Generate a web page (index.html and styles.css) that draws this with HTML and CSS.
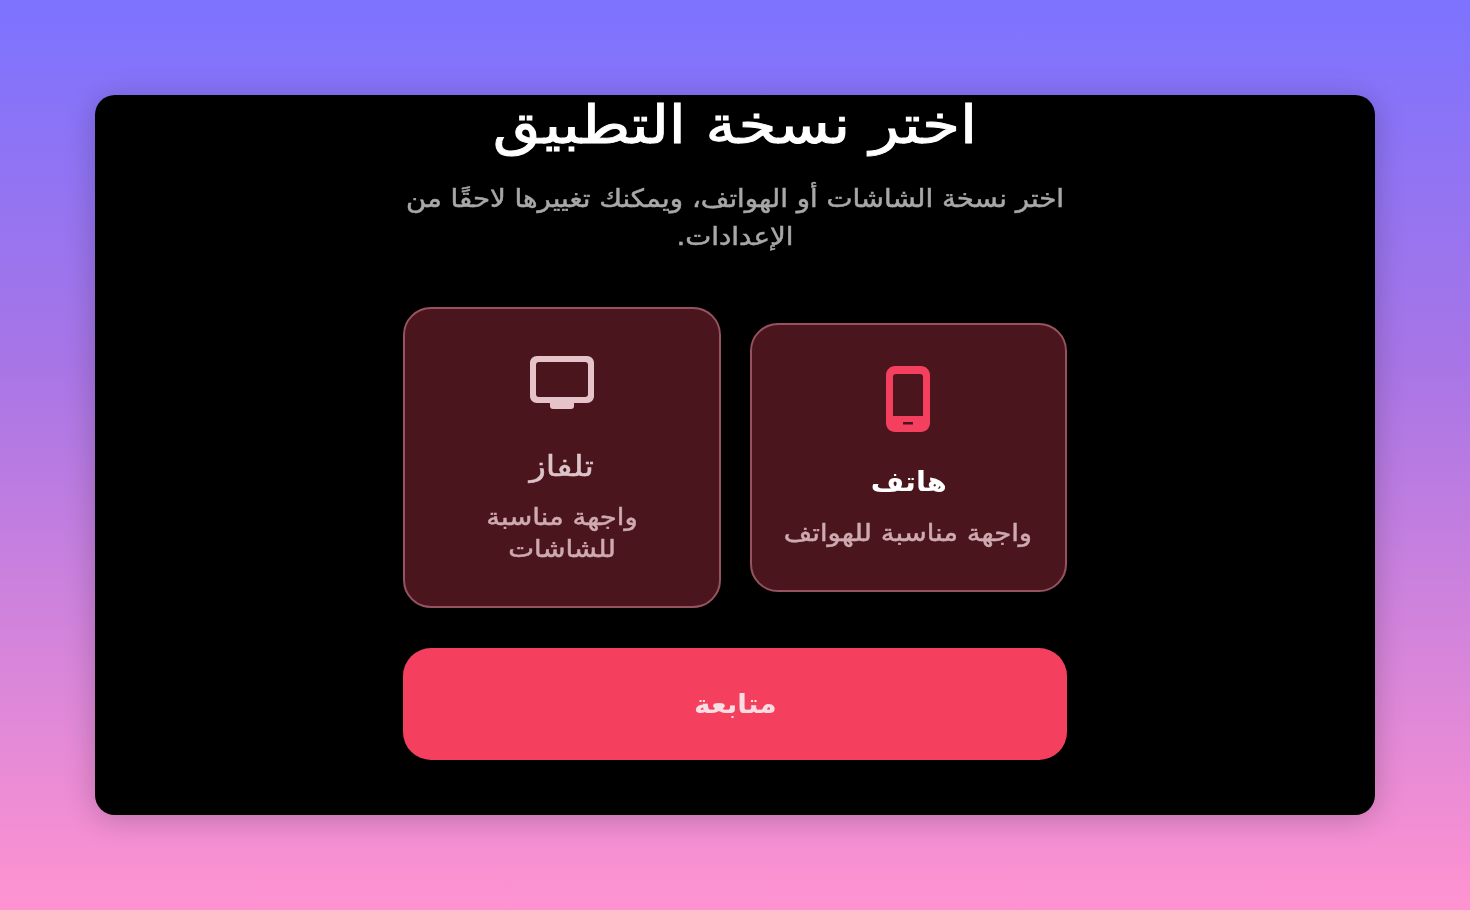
FILE: index.html
```html
<!DOCTYPE html>
<html lang="ar" dir="rtl">
<head>
    <meta charset="UTF-8">
    <meta name="viewport" content="width=device-width, initial-scale=1.0">
    <title>اختر نسخة التطبيق</title>
    <link rel="stylesheet" href="styles.css">
</head>
<body>
    <div class="window">
        <div class="content">
            <h1 class="title">اختر نسخة التطبيق</h1>
            <p class="subtitle">اختر نسخة الشاشات أو الهواتف، ويمكنك تغييرها لاحقًا من الإعدادات.</p>

            <div class="options">
                <div class="option">
                    <svg class="icon icon-phone" width="44" height="66" viewBox="0 0 44 66">
                        <path fill-rule="evenodd" fill="currentColor" d="M9 0H35C40 0 44 4 44 9V57C44 62 40 66 35 66H9C4 66 0 62 0 57V9C0 4 4 0 9 0ZM10 8C8 8 7 9 7 11V50H37V11C37 9 36 8 34 8Z"/>
                        <rect x="17" y="56" width="10" height="2.5" fill="#4a151d"/>
                    </svg>
                    <div class="option-name active">هاتف</div>
                    <div class="option-desc">واجهة مناسبة للهواتف</div>
                </div>
                <div class="option">
                    <svg class="icon icon-tv" width="66" height="66" viewBox="0 0 66 66">
                        <path fill-rule="evenodd" fill="currentColor" d="M8 6H58C62 6 65 9 65 13V46C65 50 62 53 58 53H8C4 53 1 50 1 46V13C1 9 4 6 8 6ZM10 12C8 12 7 13 7 15V44C7 46 8 47 10 47H56C58 47 59 46 59 44V15C59 13 58 12 56 12Z"/>
                        <path fill="currentColor" d="M21 53H45V56C45 58 44 59 42 59H24C22 59 21 58 21 56Z"/>
                    </svg>
                    <div class="option-name">تلفاز</div>
                    <div class="option-desc">واجهة مناسبة للشاشات</div>
                </div>
            </div>

            <button class="continue-btn"><span class="continue-label">متابعة</span></button>
        </div>
    </div>
</body>
</html>
```

FILE: styles.css
```css
* {
    box-sizing: border-box;
}

body {
    margin: 0;
    height: 910px;
    padding: 95px;
    overflow: hidden;
    background: linear-gradient(180deg, #7c73ff 0%, #a875e6 40%, #ff93d0 100%);
    font-family: "DejaVu Sans", sans-serif;
}

.window {
    height: 720px;
    background-color: #000;
    border-radius: 20px;
    box-shadow: 0 4px 30px rgba(0, 0, 0, 0.22);
    overflow: hidden;
    display: flex;
    justify-content: center;
}

.content {
    width: 664px;
    text-align: center;
    filter: blur(0.6px);
}

/* the reference face is wider and heavier than DejaVu, so text is stretched and stroked */
.title {
    margin: 0 0 25px;
    height: 60px;
    line-height: 60px;
    font-size: 53px;
    font-weight: 400;
    color: #fff;
    -webkit-text-stroke: 1px #fff;
    transform: scaleX(1.16);
}

.subtitle {
    width: 600px;
    margin: 0 auto;
    font-size: 25px;
    line-height: 38px;
    color: #a8a8a8;
    -webkit-text-stroke: 0.5px #a8a8a8;
    transform: scaleX(1.105);
}

.options {
    display: flex;
    align-items: center;
    gap: 29px;
    margin-top: 51px;
}

.option {
    flex: 1;
    padding: 41px 28px;
    background-color: #4a151d;
    border: 2px solid #96525f;
    border-radius: 28px;
}

.icon {
    display: block;
    margin: 0 auto;
}

.icon-phone {
    color: #f43f5e;
}

.icon-tv {
    color: #e6c3c8;
}

.option-name {
    margin-top: 32px;
    font-size: 29px;
    line-height: 36px;
    color: #dcc4c8;
    -webkit-text-stroke: 0.5px #dcc4c8;
    transform: scaleX(1.17);
}

.option-name.active {
    font-size: 27px;
    font-weight: 700;
    color: #fff;
    -webkit-text-stroke: 0;
    transform: scaleX(1.07);
}

.option-desc {
    margin: 17px auto 0;
    width: 224px;
    font-size: 24px;
    line-height: 32px;
    color: #cfaab0;
    -webkit-text-stroke: 0.5px #cfaab0;
    transform: scaleX(1.145);
}

.continue-btn {
    display: block;
    width: 100%;
    height: 112px;
    margin-top: 40px;
    background-color: #f43f5e;
    color: #f8dde2;
    border: none;
    border-radius: 28px;
    font-family: inherit;
    font-size: 26px;
    font-weight: 700;
}

.continue-label {
    display: inline-block;
    transform: scaleX(1.08);
}
```
